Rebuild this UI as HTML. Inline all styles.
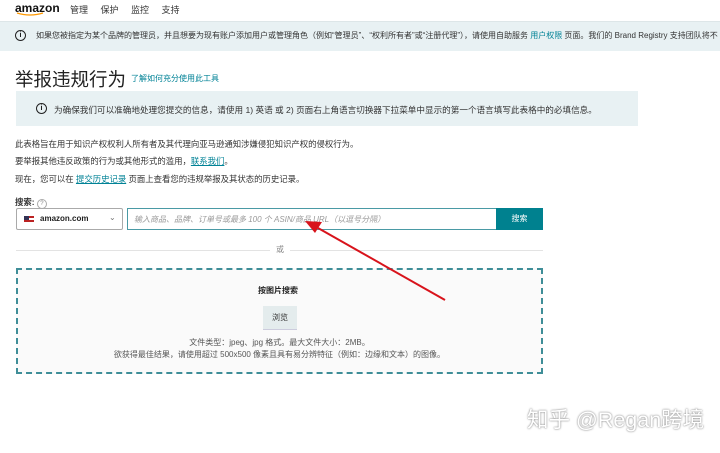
<!DOCTYPE html>
<html><head><meta charset="utf-8"><style>
body{margin:0;width:720px;height:453px;overflow:hidden;background:#fff;font-family:"Liberation Sans","Noto Sans CJK SC",sans-serif;color:#111;position:relative}
.a{position:absolute;white-space:nowrap}
.s{font-size:8.4px;color:#333}
.lk{color:#008296;text-decoration:underline}
</style></head><body>
<div class="a" style="left:15px;top:1px;font-size:12px;font-weight:bold;color:#111">amazon</div>
<svg class="a" style="left:16px;top:12px" width="30" height="5"><path d="M1 1 Q14 5 27 1" stroke="#f90" stroke-width="1.3" fill="none"/></svg>
<div class="a" style="left:70px;top:3px;font-size:9px;color:#333;word-spacing:0">管理&nbsp;&nbsp;&nbsp;&nbsp;&nbsp;保护&nbsp;&nbsp;&nbsp;&nbsp;&nbsp;监控&nbsp;&nbsp;&nbsp;&nbsp;&nbsp;支持</div>
<div class="a" style="left:0;top:21px;width:720px;height:29px;background:#e8f1f3;border-top:1px solid #dde6e8"></div>
<div class="a" style="left:15px;top:30px;width:9px;height:9px;border:1.3px solid #222;border-radius:50%;font-size:7px;text-align:center;line-height:9px;font-weight:bold">i</div>
<div class="a s" style="left:36px;top:30px;font-size:8px">如果您被指定为某个品牌的管理员，并且想要为现有账户添加用户或管理角色（例如“管理员”、“权利所有者”或“注册代理”），请使用自助服务 <span style="color:#008296">用户权限</span> 页面。我们的 Brand Registry 支持团队将不</div>
<div class="a" style="left:15px;top:66px;font-size:18.5px;color:#222">举报违规行为</div>
<div class="a" style="left:131px;top:73px;font-size:8px;color:#008296">了解如何充分使用此工具</div>
<div class="a" style="left:16px;top:91px;width:622px;height:35px;background:#e8f1f3"></div>
<div class="a" style="left:36px;top:103px;width:9px;height:9px;border:1.3px solid #222;border-radius:50%;font-size:7px;text-align:center;line-height:9px;font-weight:bold">i</div>
<div class="a s" style="left:54px;top:104px;font-size:8.6px">为确保我们可以准确地处理您提交的信息，请使用 1) 英语 或 2) 页面右上角语言切换器下拉菜单中显示的第一个语言填写此表格中的必填信息。</div>
<div class="a s" style="left:15px;top:138px">此表格旨在用于知识产权权利人所有者及其代理向亚马逊通知涉嫌侵犯知识产权的侵权行为。</div>
<div class="a s" style="left:15px;top:155px">要举报其他违反政策的行为或其他形式的滥用，<span class="lk">联系我们</span>。</div>
<div class="a s" style="left:15px;top:173px">现在，您可以在 <span class="lk">提交历史记录</span> 页面上查看您的违规举报及其状态的历史记录。</div>
<div class="a s" style="left:15px;top:196px;font-weight:bold">搜索: <span style="display:inline-block;width:8px;height:8px;border:1px solid #aaa;border-radius:50%;font-size:6px;text-align:center;line-height:8px;color:#888;font-weight:normal">?</span></div>
<div class="a" style="left:16px;top:208px;width:107px;height:22px;border:1px solid #aaa;box-sizing:border-box;border-radius:2px"></div>
<div class="a" style="left:24px;top:216px;width:10px;height:6px;background:linear-gradient(#b22 0 33%,#fff 33% 66%,#b22 66%)"><div style="width:5px;height:4px;background:#335"></div></div>
<div class="a" style="left:40px;top:214px;font-size:8px;font-weight:bold;color:#222">amazon.com</div>
<div class="a" style="left:109px;top:213px;font-size:8px;color:#777">⌄</div>
<div class="a" style="left:127px;top:208px;width:370px;height:22px;border:1px solid #4a9aa5;box-sizing:border-box"></div>
<div class="a" style="left:134px;top:214px;font-size:8px;color:#999;font-style:italic">输入商品、品牌、订单号或最多 100 个 ASIN/商品 URL（以逗号分隔）</div>
<div class="a" style="left:496px;top:208px;width:47px;height:22px;background:#00818f;color:#fff;font-size:8px;text-align:center;line-height:22px">搜索</div>
<div class="a" style="left:16px;top:250px;width:527px;height:1px;background:#e3e3e3"></div>
<div class="a" style="left:270px;top:244px;padding:0 6px;background:#fff;font-size:8px;color:#888">或</div>
<div class="a" style="left:16px;top:268px;width:527px;height:106px;border:2px dashed #3f8e98;box-sizing:border-box;background:#fafafa"></div>
<div class="a" style="left:258px;top:285px;font-size:8px;font-weight:bold;color:#222">按图片搜索</div>
<div class="a" style="left:263px;top:306px;width:34px;height:23px;background:#e4eced;border-bottom:1px solid #ccd;font-size:8px;text-align:center;line-height:23px;color:#333">浏览</div>
<div class="a s" style="left:0;width:559px;text-align:center;top:337px;font-size:8px;color:#555">文件类型：jpeg、jpg 格式。最大文件大小：2MB。</div>
<div class="a s" style="left:0;width:559px;text-align:center;top:349px;font-size:8px;color:#555">欲获得最佳结果，请使用超过 500x500 像素且具有易分辨特征（例如：边缘和文本）的图像。</div>
<svg class="a" style="left:0;top:0" width="720" height="453"><path d="M445 300 L318 228" stroke="#d8131b" stroke-width="2"/><path d="M305 221 L322 222 L315 233 Z" fill="#d8131b"/></svg>
<div class="a" style="left:527px;top:403px;font-size:21.5px;color:#fff;text-shadow:0 0 2px #888,0 0 1px #aaa">知乎 @Regan跨境</div>
</body></html>
